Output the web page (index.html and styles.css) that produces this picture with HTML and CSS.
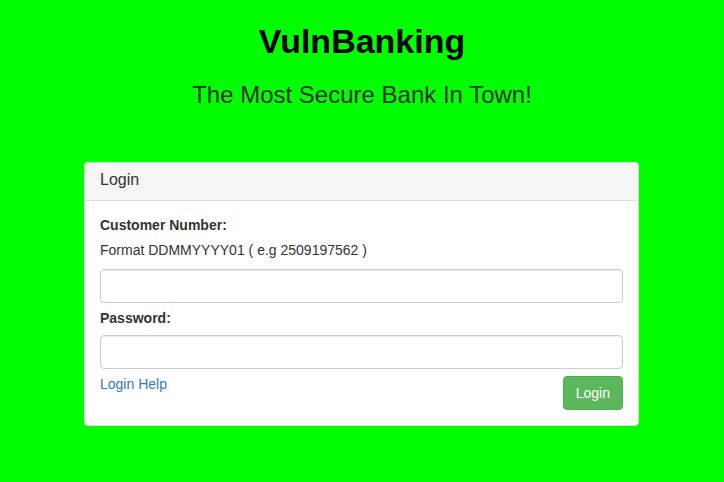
FILE: index.html
```html
<!DOCTYPE html>
<html lang="en">
<head>
<meta charset="utf-8">
<title>VulnBanking</title>
<link rel="stylesheet" href="styles.css">
</head>
<body>
<header class="hero">
  <h1 class="brand">VulnBanking</h1>
  <h3 class="tagline">The Most Secure Bank In Town!</h3>
</header>
<main class="panel">
  <div class="panel-heading">Login</div>
  <form class="panel-body" onsubmit="return false;">
    <label class="field-label" for="cust">Customer Number:</label>
    <div class="hint">Format DDMMYYYY01 ( e.g 2509197562 )</div>
    <input class="input" id="cust" type="text">
    <label class="field-label pw-label" for="pw">Password:</label>
    <input class="input" id="pw" type="password">
    <div class="form-footer">
      <a class="help-link" href="#">Login Help</a>
      <button class="btn-login" type="submit">Login</button>
    </div>
  </form>
</main>
</body>
</html>
```

FILE: styles.css
```css
html, body {
  margin: 0;
  padding: 0;
}
body {
  background: #00ff00;
  font-family: "Liberation Sans", Arial, Helvetica, sans-serif;
  font-size: 14px;
  line-height: 20px;
  color: #333333;
}
.hero {
  text-align: center;
}
.brand {
  margin: 22px 0 0;
  font-size: 34px;
  line-height: 38px;
  font-weight: bold;
  color: #000000;
}
.tagline {
  margin: 22px 0 0;
  font-size: 24px;
  line-height: 26px;
  font-weight: normal;
  color: #333333;
}
.panel {
  width: 553px;
  margin: 54px 0 0 84px;
  background: #ffffff;
  border: 1px solid #dddddd;
  border-radius: 4px;
  box-sizing: content-box;
}
.panel-heading {
  background: #f5f5f5;
  border-bottom: 1px solid #dddddd;
  border-radius: 3px 3px 0 0;
  padding: 8px 15px 11px;
  font-size: 16px;
  line-height: 18px;
  color: #333333;
}
.panel-body {
  display: flex;
  flex-direction: column;
  padding: 14px 15px 15px;
  margin: 0;
}
.field-label {
  font-weight: bold;
  margin-bottom: 5px;
}
.pw-label {
  margin-top: 5px;
  margin-bottom: 7px;
}
.hint {
  margin-bottom: 9px;
}
.input {
  display: block;
  box-sizing: border-box;
  width: 100%;
  height: 34px;
  margin: 0;
  padding: 6px 12px;
  font: inherit;
  color: #555555;
  background: #ffffff;
  border: 1px solid #cccccc;
  border-radius: 4px;
  box-shadow: inset 0 1px 1px rgba(0, 0, 0, 0.075);
  outline: none;
}
.form-footer {
  display: flex;
  justify-content: space-between;
  align-items: flex-start;
  margin-top: 5px;
}
.help-link {
  color: #337ab7;
  text-decoration: none;
  line-height: 20px;
}
.btn-login {
  margin-top: 2px;
  padding: 6px 12px;
  font: inherit;
  line-height: 20px;
  color: #ffffff;
  background: #5cb85c;
  border: 1px solid #4cae4c;
  border-radius: 4px;
  cursor: pointer;
}
```
